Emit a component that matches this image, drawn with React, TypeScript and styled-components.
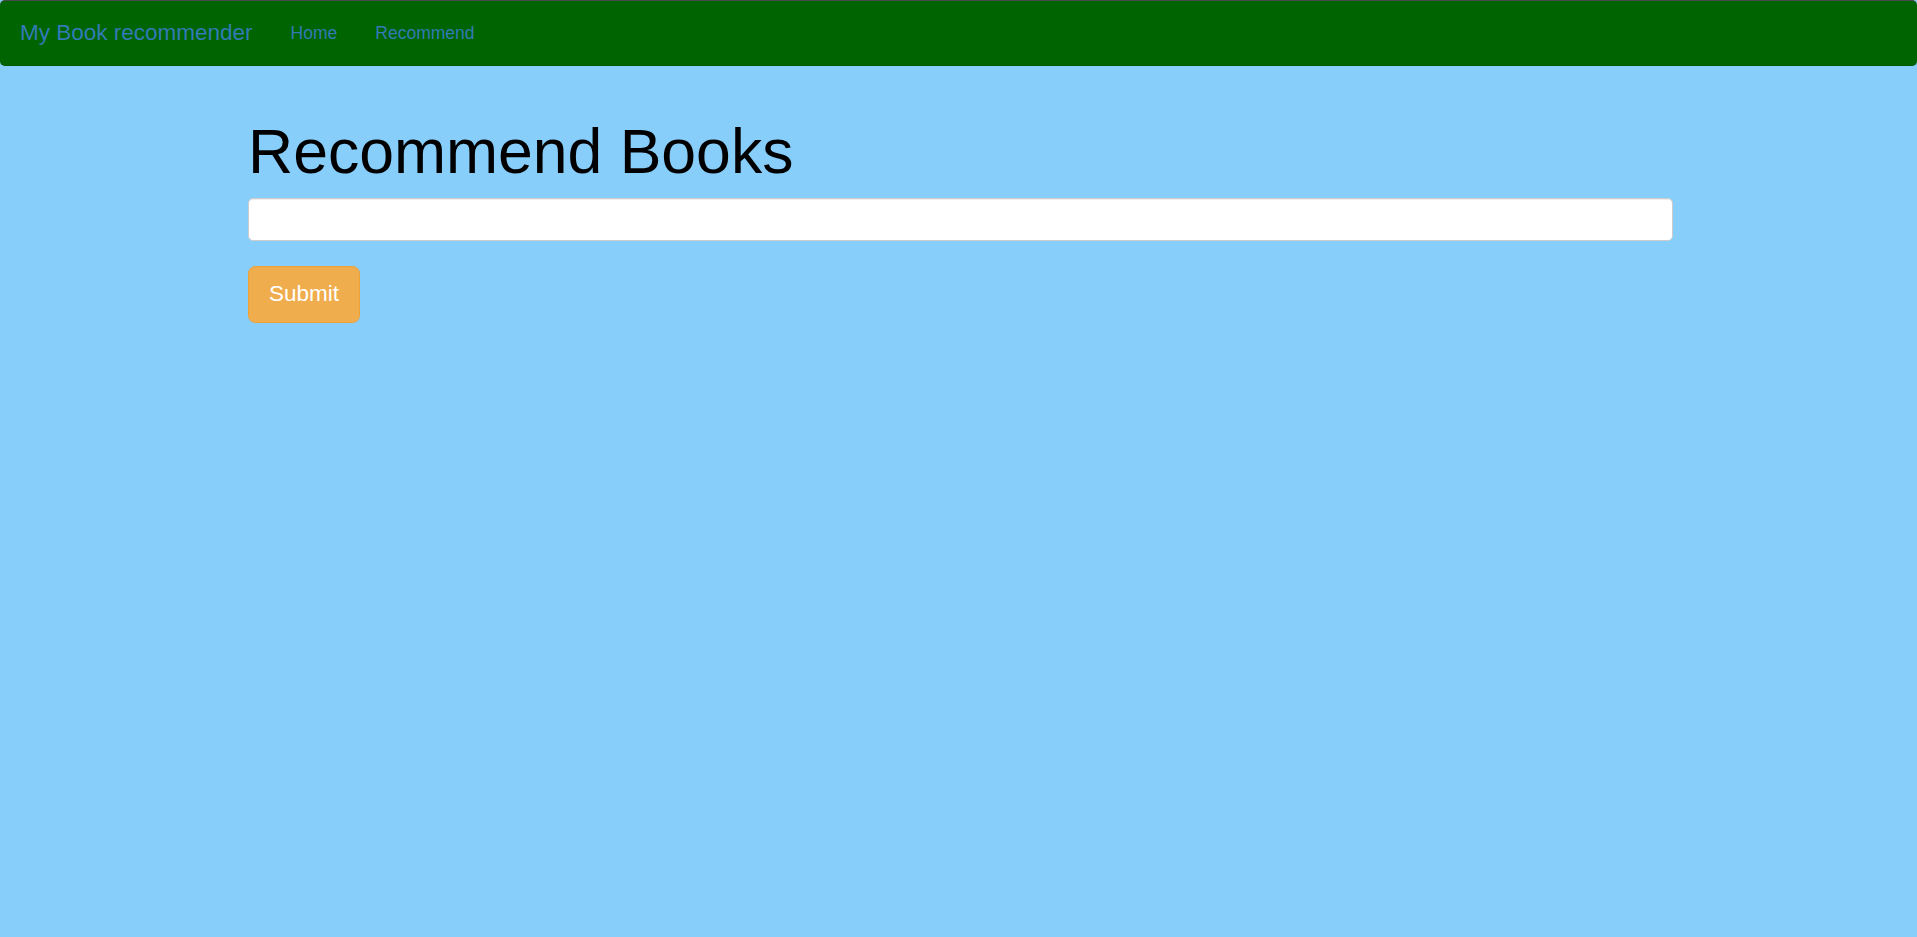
import React from "react";
import styled, { createGlobalStyle } from "styled-components";

const Global = createGlobalStyle`
  html, body { margin: 0; padding: 0; }
  body {
    background: #87cefa;
    font-family: "Liberation Sans", Arial, Helvetica, sans-serif;
    color: #333;
    min-height: 937px;
  }
  * { box-sizing: border-box; }
`;

const Navbar = styled.nav`
  display: flex;
  align-items: stretch;
  height: 66px;
  background: #006400;
  border-top: 1px solid #4a4a4a;
  border-bottom: 1px solid #005a00;
  border-radius: 5px;
  padding: 0 0 0 1px;
`;

const Brand = styled.a`
  display: flex;
  align-items: center;
  padding: 0 19px 1px 19px;
  font-size: 22.5px;
  line-height: 25px;
  color: #337ab7;
  text-decoration: none;
`;

const NavList = styled.ul`
  display: flex;
  list-style: none;
  margin: 0;
  padding: 0;
`;

const NavLink = styled.a`
  display: flex;
  align-items: center;
  height: 100%;
  padding: 0 19px;
  font-size: 17.5px;
  line-height: 25px;
  color: #337ab7;
  text-decoration: none;
`;

const Container = styled.main`
  width: 1429px;
  margin: 0 auto;
  padding: 25px 0 0 4px;
`;

const Title = styled.h1`
  margin: 26px 0 0;
  font-size: 62.5px;
  font-weight: 400;
  line-height: 68px;
  color: #000;
`;

const Form = styled.form`
  display: flex;
  flex-direction: column;
  align-items: flex-start;
  gap: 25px;
  margin-top: 13px;
`;

const Input = styled.input`
  width: 100%;
  height: 43px;
  border: 1px solid #ccc;
  border-radius: 5px;
  background: #fff;
  box-shadow: inset 0 1px 1px rgba(0, 0, 0, 0.075);
  font-family: inherit;
  font-size: 17.5px;
  padding: 7px 15px;
  outline: none;
`;

const Button = styled.button`
  height: 57px;
  padding: 0 20px;
  background: #f0ad4e;
  border: 1px solid #eea236;
  border-radius: 7.5px;
  color: #fff;
  font-family: inherit;
  font-size: 22.5px;
  line-height: 1;
  cursor: pointer;
`;

export default function App() {
  return (
    <>
      <Global />
      <Navbar>
        <Brand href="#">My Book recommender</Brand>
        <NavList>
          <li><NavLink href="#">Home</NavLink></li>
          <li><NavLink href="#">Recommend</NavLink></li>
        </NavList>
      </Navbar>
      <Container>
        <Title>Recommend Books</Title>
        <Form onSubmit={(e) => e.preventDefault()}>
          <Input type="text" />
          <Button type="submit">Submit</Button>
        </Form>
      </Container>
    </>
  );
}
